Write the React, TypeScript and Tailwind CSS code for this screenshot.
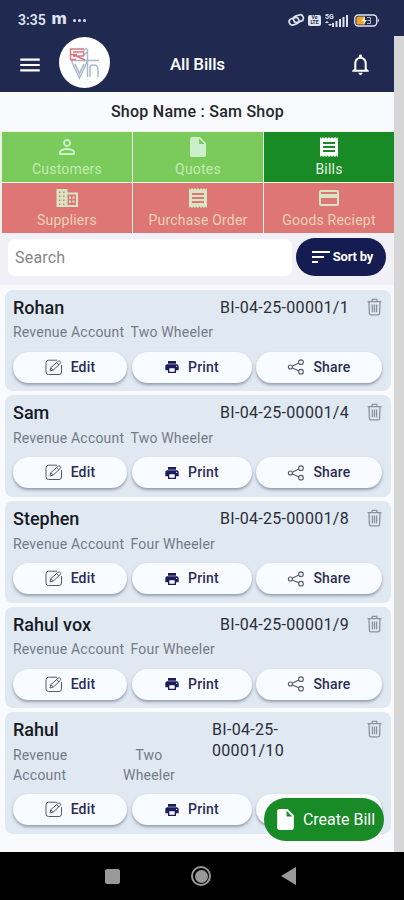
import { useState } from "react";
import type { ReactNode } from "react";
import {
  MdCreditCard,
  MdInsertDriveFile,
  MdMenu,
  MdNotificationsNone,
  MdPersonOutline,
  MdPrint,
  MdReceipt,
  MdSort,
} from "react-icons/md";

type Bill = {
  name: string;
  number: string;
  kind: string;
  narrow?: boolean;
};

const bills: Bill[] = [
  { name: "Rohan", number: "BI-04-25-00001/1", kind: "Two Wheeler" },
  { name: "Sam", number: "BI-04-25-00001/4", kind: "Two Wheeler" },
  { name: "Stephen", number: "BI-04-25-00001/8", kind: "Four Wheeler" },
  { name: "Rahul vox", number: "BI-04-25-00001/9", kind: "Four Wheeler" },
  { name: "Rahul", number: "BI-04-25-00001/10", kind: "Two Wheeler", narrow: true },
];

const tabs = [
  { label: "Customers", icon: MdPersonOutline, color: "bg-[#7acb5b] text-[#c3ecb4]", iconColor: "text-[#c9f0c8]" },
  { label: "Quotes", icon: MdInsertDriveFile, color: "bg-[#7acb5b] text-[#c3ecb4]", iconColor: "text-[#c9f0c8]" },
  { label: "Bills", icon: MdReceipt, color: "bg-[#188a26] text-[#e6f5e4]", iconColor: "text-white" },
  { label: "Suppliers", icon: BuildingIcon, color: "bg-[#df7676] text-[#ecd2b4]", iconColor: "text-[#d6e6c4]" },
  { label: "Purchase Order", icon: MdReceipt, color: "bg-[#df7676] text-[#ecd2b4]", iconColor: "text-[#d6e6c4]" },
  { label: "Goods Reciept", icon: MdCreditCard, color: "bg-[#df7676] text-[#ecd2b4]", iconColor: "text-[#d6e6c4]" },
];

function BuildingIcon({ className }: { className?: string }) {
  return (
    <svg className={className} viewBox="0 0 24 24" fill="currentColor">
      <path
        fillRule="evenodd"
        d="M1.500 3h11v3.500H23V21H1.500zM4 5.500v1.500h1.500V5.500zm4 0v1.500h1.500V5.500zM4 9.500v1.500h1.500V9.500zm4 0v1.500h1.500V9.500zM4 13.500v1.500h1.500v-1.500zm4 0v1.500h1.500v-1.500zM4 17.500V19h1.500v-1.500zm4 0V19h1.500v-1.500zM12.500 8.500V19H21V8.500z"
      />
      <path d="M14 10.500h2v2.300h-2zm3.500 0h2v2.300h-2zM14 14.500h2v2.300h-2zm3.500 0h2v2.300h-2z" />
    </svg>
  );
}

function EditIcon() {
  return (
    <svg width="18" height="17" viewBox="0 0 18 17" fill="none" stroke="#555a66" strokeWidth="1">
      <path d="M12 1.200H3.500A2.500 2.500 0 0 0 1 3.700V13A2.500 2.500 0 0 0 3.500 15.500H14A2.500 2.500 0 0 0 16.500 13V6" />
      <path d="M5 12l.8-3.400L13.200 2.200a1.300 1.300 0 0 1 1.900.1l.3.4a1.300 1.300 0 0 1-.1 1.800L8.300 11 5 12ZM11.700 3.600l2.200 2.300M6 8.700l2.200 2.200" />
    </svg>
  );
}

function ShareIcon() {
  return (
    <svg width="18" height="16" viewBox="0 0 18 16" fill="none" stroke="#555a66" strokeWidth="1.100">
      <circle cx="3.400" cy="8" r="2" />
      <circle cx="14" cy="3.200" r="2.300" />
      <circle cx="14" cy="12.700" r="2.300" />
      <path d="M5.300 7.200l6.500-3.100M5.300 8.900l6.500 2.800" />
    </svg>
  );
}

function TrashIcon() {
  return (
    <svg className="mt-px" width="15" height="18" viewBox="0 0 15 18" fill="none" stroke="#8a929e" strokeWidth="1.300">
      <path d="M.5 3.700h14M4.800 3.500 5.400 1.400h4.200l.6 2.100M2 4l.4 11.200c0 1 .7 1.700 1.600 1.700h7c.9 0 1.600-.7 1.600-1.700L13 4" />
      <path d="M5.400 6.500v7.800M7.500 6.500v7.800M9.600 6.500v7.800" strokeWidth="1.300" />
    </svg>
  );
}

function Logo() {
  return (
    <div className="size-[51px] rounded-full bg-white">
      <svg width="51" height="51" viewBox="0 0 51 51" fill="none">
        <g stroke="#a9b9ca" strokeWidth="1.500">
          <path d="M11.500 23.500H40M12.500 24 20.500 41 28.500 24M16 27l4.500 9.500L25 27" />
          <path d="M28.500 12v28M31 40V30.500q0-2.500 3-2.500 5 0 5 4v8M24 14l4-3M24 19l4-4" />
        </g>
        <g stroke="#dc7480" strokeWidth="1.400">
          <path d="M25 12H11.500v10.500H17M14 15h10.500v4H14M17 19l9 4M12 17.500h6" />
        </g>
      </svg>
    </div>
  );
}

function StatusBar() {
  return (
    <div className="flex h-9 items-center justify-between bg-[#202a50] pt-1 pr-[24px] pl-[18px] text-[#dfe3ee]">
      <div className="flex items-center">
        <span className="w-[33.500px] text-[14px] font-semibold">3:35</span>
        <span className="-mt-[4px] font-[Inter,sans-serif] text-[16.500px] leading-none font-extrabold">m</span>
        <span className="ml-[6px] flex gap-[2px]">
          <i className="size-[3px] rounded-full bg-current" />
          <i className="size-[3px] rounded-full bg-current" />
          <i className="size-[3px] rounded-full bg-current" />
        </span>
      </div>
      <div className="flex items-center">
        <svg width="17" height="14" viewBox="0 0 17 14" fill="none" stroke="currentColor" strokeWidth="1.700">
          <rect x="1" y="5" width="10" height="6.500" rx="3.200" transform="rotate(-18 6 8)" />
          <rect x="5.500" y="2.500" width="10" height="6.500" rx="3.200" transform="rotate(-18 10 6)" />
        </svg>
        <span className="ml-[3px] flex h-[11px] w-[13px] flex-col items-center justify-center rounded-[2px] bg-[#dfe3ee] text-[5px] leading-[5px] font-bold text-[#202a50]">
          <span>Vo</span>
          <span>LTE</span>
        </span>
        <svg className="ml-[3px]" width="25" height="15" viewBox="0 0 25 15" fill="currentColor">
          <text x="1" y="6" fontSize="7" fontWeight="700">5G</text>
          <path d="M1 10l2-2 2 2zM4 11h4l-2 2zM8 10h2v4H8zM11.500 8h2v6h-2zM15 6h2v8h-2zM18.500 4h2v10h-2zM22 2h2v12h-2z" />
        </svg>
        <svg className="ml-[5px]" width="26" height="13" viewBox="0 0 26 13" fill="none">
          <rect x=".8" y="1" width="22" height="11" rx="3.500" stroke="#dfe3ee" strokeWidth="1.400" />
          <path d="M24 4.500q2 2 0 4z" fill="#dfe3ee" />
          <path d="M4 2.500h7v8H4q-1.500 0-1.500-1.500V4Q2.500 2.500 4 2.500z" fill="#efa52d" />
          <path d="M11 2.500 7.500 7H10l-.5 3.500L13 6h-2.500z" fill="#fff" />
          <path d="M13 3.500h3.500v6H13M13.500 6.500h3" stroke="#aab0c0" />
        </svg>
      </div>
    </div>
  );
}

function ActionButton({ icon, label, className }: { icon?: ReactNode; label?: string; className: string }) {
  return (
    <button
      className={`flex h-[31px] items-center justify-center gap-2 rounded-full bg-[#f8fbff] text-[14px] font-medium tracking-[0.200px] text-[#2c2c54] shadow-[0_2px_3px_rgba(70,85,105,0.5)] ${className}`}
    >
      {icon}
      {label && <span>{label}</span>}
    </button>
  );
}

function BillCard({ bill }: { bill: Bill }) {
  return (
    <div
      className={`flex flex-col rounded-[8px] bg-[#e0e8f2] pt-[7px] pr-[9px] pb-2 pl-2 ${bill.narrow ? "h-[122px]" : "h-[101.700px]"}`}
    >
      {bill.narrow ? (
        <div className="flex h-[68px]">
          <div className="w-[199px]">
            <h3 className="text-[18px] leading-[22px] font-medium text-[#161a22]">{bill.name}</h3>
            <div className="mt-[3.500px] flex text-[14px] leading-[20.500px] tracking-[0.200px] text-[#737b88]">
              <p className="w-[95px]">Revenue<br />Account</p>
              <p className="w-[82px] text-center">Two<br />Wheeler</p>
            </div>
          </div>
          <p className="flex-1 pt-px text-[16px] leading-[20.500px] tracking-[0.300px] text-[#2a2e38]">
            BI-04-25-<br />00001/10
          </p>
          <TrashIcon />
        </div>
      ) : (
        <div className="h-[47px]">
          <div className="flex h-[22px] items-start">
            <h3 className="flex-1 text-[18px] leading-[22px] font-medium text-[#161a22]">{bill.name}</h3>
            <p className="mr-[18px] text-[16px] leading-[22px] tracking-[0.300px] text-[#2a2e38]">{bill.number}</p>
            <TrashIcon />
          </div>
          <div className="mt-[3.500px] flex text-[14px] leading-[21px] tracking-[0.200px] text-[#737b88]">
            <p className="w-[117.500px]">Revenue Account</p>
            <p>{bill.kind}</p>
          </div>
        </div>
      )}
      <div className={`flex justify-between ${bill.narrow ? "mt-[7px]" : "mt-[8px]"}`}>
        <ActionButton icon={<EditIcon />} label="Edit" className="w-[114px]" />
        <ActionButton icon={<MdPrint className="size-4 text-[#1c1c5c]" />} label="Print" className="w-[120px]" />
        {/* on the last card the floating button takes the place of share */}
        {bill.narrow ? (
          <ActionButton className="w-[126px]" />
        ) : (
          <ActionButton icon={<ShareIcon />} label="Share" className="w-[126px]" />
        )}
      </div>
    </div>
  );
}

export default function App() {
  const [search, setSearch] = useState("");

  return (
    <div className="relative flex h-[900px] w-[404px] flex-col overflow-hidden bg-[#f9fafe] font-[Roboto,sans-serif]">
      <StatusBar />

      <div className="flex h-[816px]">
        <main className="flex w-[394px] flex-col">
          <header className="flex h-[56px] items-start bg-[#202a50] text-white">
            <MdMenu className="mt-[16px] ml-[16.500px] size-[26px]" />
            <div className="mt-px ml-[16px]">
              <Logo />
            </div>
            <h1 className="mt-[16px] ml-[60.500px] flex-1 text-[17px] leading-6 font-medium tracking-[-0.200px] whitespace-nowrap">
              All Bills
            </h1>
            <MdNotificationsNone className="mt-[16px] mr-[21px] size-[25px]" />
          </header>

          <p className="flex h-[39px] items-center justify-center pl-px text-[16px] font-medium tracking-[0.250px] text-[#24262c]">
            Shop Name : Sam Shop
          </p>

          <nav className="grid grid-cols-3 gap-px bg-[#eef3e6] pt-px pl-[2px]">
            {tabs.map(({ label, icon: Icon, color, iconColor }) => (
              <button key={label} className={`flex h-[50px] flex-col items-center pt-[3px] ${color}`}>
                <Icon className={`size-6 ${iconColor}`} />
                <span className="text-[14px] leading-5 tracking-[0.200px] whitespace-nowrap">{label}</span>
              </button>
            ))}
          </nav>

          <div className="flex h-[52px] items-start bg-[#f0f0f6] pt-[5px] pr-2 pl-2">
            <input
              className="mt-[1px] h-[37px] w-[284px] rounded-[7px] bg-white px-[7px] text-[16px] tracking-[0.200px] outline-none placeholder:text-[#858585]"
              placeholder="Search"
              value={search}
              onChange={(e) => setSearch(e.target.value)}
            />
            <button className="ml-1 flex h-[38px] w-[90px] items-center justify-center rounded-full bg-[#141c51] text-[13px] font-bold tracking-[-0.200px] text-white">
              <MdSort className="size-6" />
              <span className="whitespace-nowrap">Sort by</span>
            </button>
          </div>

          <div className="flex flex-col gap-1 pt-[4.700px] pr-[3px] pl-[5px]">
            {bills.map((bill) => (
              <BillCard key={bill.number} bill={bill} />
            ))}
          </div>
        </main>
        <div className="w-[10px] bg-[#d6d6d6]" />
      </div>

      {/* android navigation bar */}
      <footer className="flex h-12 items-center bg-black pl-[105px]">
        <div className="size-[15px] rounded-[2px] bg-[#999]" />
        <div className="ml-[71px] flex size-[20px] items-center justify-center rounded-full border-2 border-[#999]">
          <div className="size-[13px] rounded-full bg-[#999]" />
        </div>
        <svg className="ml-[70px]" width="15" height="18" viewBox="0 0 15 18" fill="#999">
          <path d="M15 0v18L0 9z" />
        </svg>
      </footer>

      {/* floating create button */}
      <button className="absolute top-[798px] left-[264px] flex h-[43px] w-[120px] items-center justify-center gap-[5px] rounded-full bg-[#188a26] text-[16px] whitespace-nowrap text-white">
        <MdInsertDriveFile className="size-[25px]" />
        <span>Create Bill</span>
      </button>
    </div>
  );
}
